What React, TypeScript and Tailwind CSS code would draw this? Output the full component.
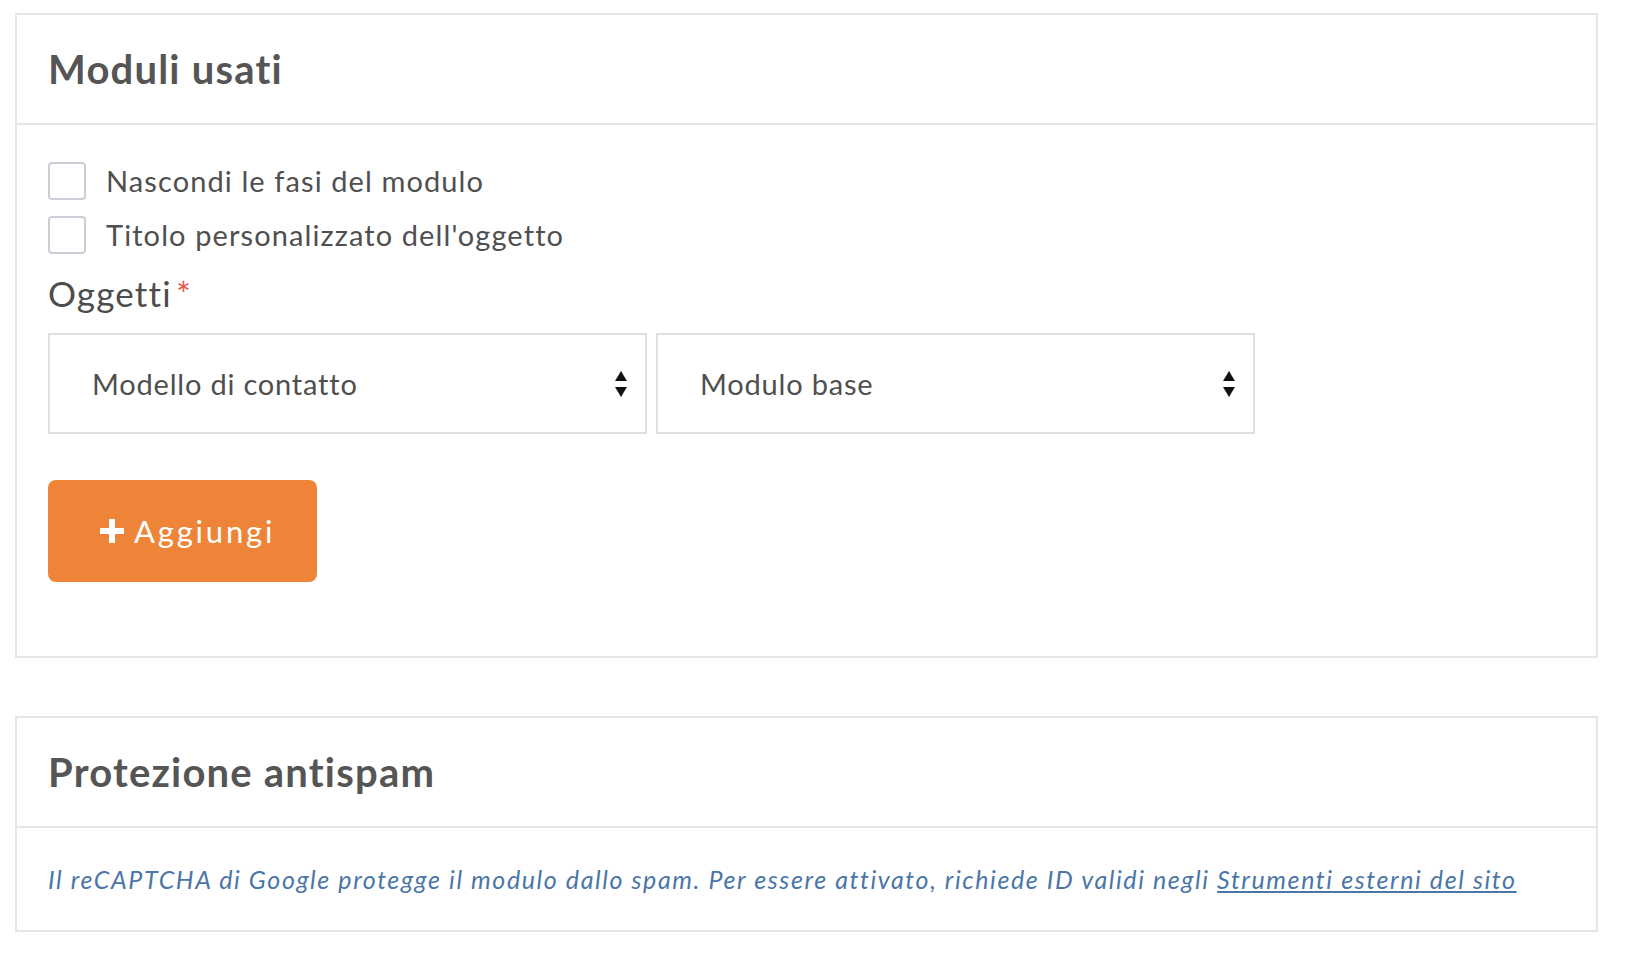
import React from "react";

const font = { fontFamily: "Lato, 'Noto Sans', sans-serif" };

function Arrows() {
  return (
    <svg width="12" height="26" viewBox="0 0 12 26" className="shrink-0">
      <path d="M6 0 L12 10 L0 10 Z" fill="#111" />
      <path d="M0 16 L12 16 L6 26 Z" fill="#111" />
    </svg>
  );
}

function Select({ label }: { label: string }) {
  return (
    <div className="flex h-[101px] w-[599px] items-center justify-between border-2 border-[#dcdfe4] bg-white pl-[42px] pr-[18px]">
      <span className="text-[29px] leading-[40px] tracking-[0.8px] text-[#4f4f4f]">{label}</span>
      <Arrows />
    </div>
  );
}

function Check({ label }: { label: string }) {
  return (
    <div className="flex h-[38px] items-center gap-[20px]">
      <div className="h-[38px] w-[38px] rounded-[4px] border-2 border-[#c9ced8] bg-white" />
      <span className="text-[29px] leading-[38px] tracking-[1.1px] text-[#4f4f4f]">{label}</span>
    </div>
  );
}

export default function App() {
  return (
    <div className="min-h-[965px] bg-white pl-[15px] pr-[33px] pt-[13px]" style={font}>
      <section className="border-2 border-[#e6e6e6]">
        <div className="flex h-[110px] items-center border-b-2 border-[#e6e6e6] px-[31px]">
          <h2 className="text-[40px] font-bold leading-[48px] tracking-[1.2px] text-[#555555]">Moduli usati</h2>
        </div>
        <div className="px-[31px] pb-[74px] pt-[37px]">
          <div className="flex flex-col gap-[16px]">
            <Check label="Nascondi le fasi del modulo" />
            <Check label="Titolo personalizzato dell'oggetto" />
          </div>
          <div className="mt-[18px] flex h-[42px] items-center text-[35px] leading-[42px] tracking-[1.2px] text-[#4d4d4d]">
            <span>Oggetti</span>
            <span className="ml-[4px] self-start text-[#e5584f]">*</span>
          </div>
          <div className="mt-[19px] flex gap-[9px]">
            <Select label="Modello di contatto" />
            <Select label="Modulo base" />
          </div>
          <button className="mt-[46px] flex h-[102px] w-[269px] items-center justify-start gap-[10px] rounded-[8px] bg-[#ee8437] pl-[52px] text-white">
            <svg width="24" height="24" viewBox="0 0 24 24">
              <path d="M9 0 H15 V9 H24 V15 H15 V24 H9 V15 H0 V9 H9 Z" fill="#fff" />
            </svg>
            <span className="text-[31px] leading-[40px] tracking-[2.8px]">Aggiungi</span>
          </button>
        </div>
      </section>

      <section className="mt-[58px] border-2 border-[#e6e6e6]">
        <div className="flex h-[110px] items-center border-b-2 border-[#e6e6e6] px-[31px]">
          <h2 className="text-[40px] font-bold leading-[48px] tracking-[1.2px] text-[#555555]">Protezione antispam</h2>
        </div>
        <div className="flex h-[102px] items-center px-[31px]">
          <p className="whitespace-nowrap text-[25px] italic leading-[34px] tracking-[1.6px] text-[#4a76a8]">
            Il reCAPTCHA di Google protegge il modulo dallo spam. Per essere attivato, richiede ID validi negli{" "}
            <a className="underline" href="#">
              Strumenti esterni del sito
            </a>
          </p>
        </div>
      </section>
    </div>
  );
}
